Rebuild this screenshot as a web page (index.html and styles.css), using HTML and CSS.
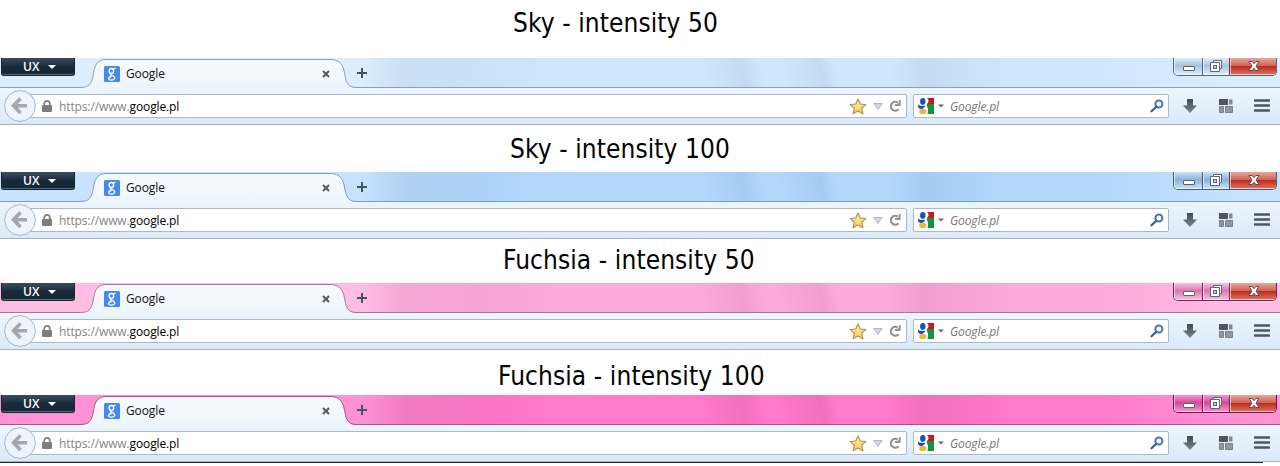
FILE: index.html
```html
<!DOCTYPE html>
<html lang="en">
<head>
<meta charset="utf-8">
<title>Theme intensity</title>
<link rel="stylesheet" href="styles.css">
</head>
<body>
<svg class="defs" width="0" height="0" aria-hidden="true">
  <defs>
    <linearGradient id="tabfill" x1="0" y1="0" x2="0" y2="1"><stop offset="0" stop-color="#f6fafe"/><stop offset="1" stop-color="#edf5fc"/></linearGradient>
    <linearGradient id="gold" x1="0" y1="0" x2="0" y2="1"><stop offset="0" stop-color="#fff3a0"/><stop offset="1" stop-color="#f7c858"/></linearGradient>
    <linearGradient id="steel" x1="0" y1="0" x2="0" y2="1"><stop offset="0" stop-color="#414b55"/><stop offset="1" stop-color="#7a8590"/></linearGradient>
    <symbol id="tabshape" viewBox="0 0 276 30">
      <path d="M0 30V29.5C9 29.500 11.500 26 13 18C14.500 9 16 1.500 26 1.500H250C260 1.500 263 7 264.500 15C266 23 267 29.500 276 29.500V30Z" fill="url(#tabfill)" stroke="none"/>
      <path d="M0 29.500C9 29.500 11.500 26 13 18C14.500 9 16 1.500 26 1.500H250C260 1.500 263 7 264.500 15C266 23 267 29.500 276 29.500" fill="none"/>
    </symbol>
    <symbol id="favicon" viewBox="0 0 16 16">
      <rect width="16" height="16" rx="1.500" fill="#4688ee"/>
      <g fill="none" stroke="#fff"><ellipse cx="7.400" cy="5" rx="2.200" ry="2.500" stroke-width="1.400"/><path d="M9 3.200L11.500 2.200M8.500 7.300C5 8.500 6.500 9 8.500 9.700C12.500 11.200 10.500 14.200 7.500 14.200C4 14.200 3.500 11 7.500 10.500" stroke-width="1.300"/></g>
    </symbol>
    <symbol id="close" viewBox="0 0 8 8"><path d="M1 1L7 7M7 1L1 7" stroke="#535a61" stroke-width="2"/></symbol>
    <symbol id="plus" viewBox="0 0 10 10"><path d="M5 0V10M0 5H10" stroke="#465360" stroke-width="2"/></symbol>
    <symbol id="back" viewBox="0 0 32 32">
      <circle cx="16" cy="16" r="15.400" fill="#edf4fb" stroke="#a8b5c4"/>
      <path d="M16.500 8.500L9.500 15.700L16.500 23M10 15.700H23" fill="none" stroke="#a2a8ae" stroke-width="3.600"/>
    </symbol>
    <symbol id="lock" viewBox="0 0 10 12"><path d="M2.200 6V3.700C2.200 0 7.800 0 7.800 3.700V6" fill="none" stroke="#7d7d7d" stroke-width="1.700"/><rect y="5" width="10" height="7" rx="1" fill="#7d7d7d"/></symbol>
    <symbol id="star" viewBox="0 0 18 17"><path d="M9 1L11.300 6L16.800 6.600L12.700 10.300L13.900 15.800L9 13L4.100 15.800L5.300 10.300L1.200 6.600L6.700 6Z" fill="url(#gold)" stroke="#b4935a" stroke-linejoin="round" stroke-width="1.200"/></symbol>
    <symbol id="drop" viewBox="0 0 10 7"><path d="M.8.500H9.200L5 6.500Z" fill="#d4d8dc" stroke="#b2b7bc"/></symbol>
    <symbol id="reload" viewBox="0 0 12 12"><path d="M8.800 2.600A4.400 4.400 0 1 0 9.600 9.200" fill="none" stroke="#929292" stroke-width="2.200"/><path d="M11.600 0V6H5.800V4.300L8.500 4L9.900 2.600V0Z" fill="#929292"/></symbol>
    <symbol id="engine" viewBox="0 0 16 16">
      <path d="M8.500 0H16V6H8.500Z" fill="#d1161b"/><path d="M8.500 6H16V16H8.500Z" fill="#139344"/>
      <path d="M9 0C12 3 10 5 8.500 6.500C9 9 11 10 9.500 16H0V0Z" fill="#fff"/>
      <ellipse cx="4.800" cy="3.400" rx="2.700" ry="3.400" fill="#1754ae"/><path d="M0 6.500C3 9 5 7 7.500 8.500L4.500 10.800C2.500 11.500 0 10.500 0 8.500Z" fill="#1754ae"/>
      <ellipse cx="4.800" cy="13.400" rx="3.600" ry="2.600" fill="#f3b53c"/>
    </symbol>
    <symbol id="caret" viewBox="0 0 6 4"><path d="M0 .5H6L3 3.500Z" fill="#686868"/></symbol>
    <symbol id="find" viewBox="0 0 14 14"><circle cx="8.900" cy="5" r="3.500" fill="none" stroke="#3e79ae" stroke-width="2"/><path d="M6.300 7.700L1.500 12.300" stroke="#315f91" stroke-width="2.200" stroke-linecap="round"/></symbol>
    <symbol id="down" viewBox="0 0 14 14"><path d="M4 0H10V6.500H14L7 14L0 6.500H4Z" fill="url(#steel)"/></symbol>
    <symbol id="tiles" viewBox="0 0 14 14"><path d="M0 0H9V6H0Z" fill="#4d5660"/><path d="M10 .5H13.500V5.500H10Z" fill="#7f8993"/><path d="M.5 7.500H4.500V13.500H.5Z" fill="#9099a2" stroke="#77818b"/><path d="M6.500 7.500H13.500V13.500H6.500Z" fill="#9099a2" stroke="#77818b"/></symbol>
    <symbol id="menu" viewBox="0 0 16 13"><path d="M1 1.500H15M1 6.500H15M1 11.500H15" stroke="#4c5762" stroke-width="2.700" stroke-linecap="round"/></symbol>
    <symbol id="min" viewBox="0 0 12 5"><rect x=".5" y=".5" width="11" height="4" rx=".5" fill="#fff" stroke="#5b6474"/></symbol>
    <symbol id="restore" viewBox="0 0 12 12"><path d="M3.500 .5H11.500V8.500H9.500V11.500H.5V2.500H3.500Z" fill="#fff" stroke="#5b6474"/><path d="M3.500 2.500H9.500V8.500" fill="none" stroke="#5b6474"/><rect x="3.500" y="5.500" width="3" height="3" fill="#c5cfdd" stroke="#5b6474"/></symbol>
    <symbol id="x" viewBox="0 0 12 10"><path d="M1 .5H4.200L6 2.700L7.800 .5H11L8 5L11 9.500H7.800L6 7.300L4.200 9.500H1L4 5Z" fill="#fff" stroke="#6d4650"/></symbol>
  </defs>
</svg>

<section class="sample sky-50">
  <h2 class="title">Sky - intensity 50</h2>
  <div class="window">
    <div class="strip">
      <div class="app">UX<i class="arrow"></i></div>
      <div class="tab"><svg class="shape"><use href="#tabshape"/></svg><svg class="fav"><use href="#favicon"/></svg><span class="name">Google</span><svg class="close"><use href="#close"/></svg></div>
      <svg class="plus"><use href="#plus"/></svg>
      <div class="controls"><b class="cell"><svg class="min"><use href="#min"/></svg></b><b class="cell mid"><svg class="restore"><use href="#restore"/></svg></b><b class="cell quit"><svg class="x"><use href="#x"/></svg></b></div>
    </div>
    <div class="toolbar">
      <svg class="back"><use href="#back"/></svg>
      <div class="field url"><svg class="lock"><use href="#lock"/></svg><span class="address">https://www.<em>google.pl</em></span><svg class="star"><use href="#star"/></svg><svg class="drop"><use href="#drop"/></svg><svg class="reload"><use href="#reload"/></svg></div>
      <div class="field search"><svg class="engine"><use href="#engine"/></svg><svg class="caret"><use href="#caret"/></svg><span class="hint">Google.pl</span><svg class="find"><use href="#find"/></svg></div>
      <svg class="down"><use href="#down"/></svg><svg class="tiles"><use href="#tiles"/></svg><svg class="menu"><use href="#menu"/></svg>
    </div>
  </div>
</section>

<section class="sample sky-100">
  <h2 class="title">Sky - intensity 100</h2>
  <div class="window">
    <div class="strip">
      <div class="app">UX<i class="arrow"></i></div>
      <div class="tab"><svg class="shape"><use href="#tabshape"/></svg><svg class="fav"><use href="#favicon"/></svg><span class="name">Google</span><svg class="close"><use href="#close"/></svg></div>
      <svg class="plus"><use href="#plus"/></svg>
      <div class="controls"><b class="cell"><svg class="min"><use href="#min"/></svg></b><b class="cell mid"><svg class="restore"><use href="#restore"/></svg></b><b class="cell quit"><svg class="x"><use href="#x"/></svg></b></div>
    </div>
    <div class="toolbar">
      <svg class="back"><use href="#back"/></svg>
      <div class="field url"><svg class="lock"><use href="#lock"/></svg><span class="address">https://www.<em>google.pl</em></span><svg class="star"><use href="#star"/></svg><svg class="drop"><use href="#drop"/></svg><svg class="reload"><use href="#reload"/></svg></div>
      <div class="field search"><svg class="engine"><use href="#engine"/></svg><svg class="caret"><use href="#caret"/></svg><span class="hint">Google.pl</span><svg class="find"><use href="#find"/></svg></div>
      <svg class="down"><use href="#down"/></svg><svg class="tiles"><use href="#tiles"/></svg><svg class="menu"><use href="#menu"/></svg>
    </div>
  </div>
</section>

<section class="sample fuchsia-50">
  <h2 class="title">Fuchsia - intensity 50</h2>
  <div class="window">
    <div class="strip">
      <div class="app">UX<i class="arrow"></i></div>
      <div class="tab"><svg class="shape"><use href="#tabshape"/></svg><svg class="fav"><use href="#favicon"/></svg><span class="name">Google</span><svg class="close"><use href="#close"/></svg></div>
      <svg class="plus"><use href="#plus"/></svg>
      <div class="controls"><b class="cell"><svg class="min"><use href="#min"/></svg></b><b class="cell mid"><svg class="restore"><use href="#restore"/></svg></b><b class="cell quit"><svg class="x"><use href="#x"/></svg></b></div>
    </div>
    <div class="toolbar">
      <svg class="back"><use href="#back"/></svg>
      <div class="field url"><svg class="lock"><use href="#lock"/></svg><span class="address">https://www.<em>google.pl</em></span><svg class="star"><use href="#star"/></svg><svg class="drop"><use href="#drop"/></svg><svg class="reload"><use href="#reload"/></svg></div>
      <div class="field search"><svg class="engine"><use href="#engine"/></svg><svg class="caret"><use href="#caret"/></svg><span class="hint">Google.pl</span><svg class="find"><use href="#find"/></svg></div>
      <svg class="down"><use href="#down"/></svg><svg class="tiles"><use href="#tiles"/></svg><svg class="menu"><use href="#menu"/></svg>
    </div>
  </div>
</section>

<section class="sample fuchsia-100">
  <h2 class="title">Fuchsia - intensity 100</h2>
  <div class="window">
    <div class="strip">
      <div class="app">UX<i class="arrow"></i></div>
      <div class="tab"><svg class="shape"><use href="#tabshape"/></svg><svg class="fav"><use href="#favicon"/></svg><span class="name">Google</span><svg class="close"><use href="#close"/></svg></div>
      <svg class="plus"><use href="#plus"/></svg>
      <div class="controls"><b class="cell"><svg class="min"><use href="#min"/></svg></b><b class="cell mid"><svg class="restore"><use href="#restore"/></svg></b><b class="cell quit"><svg class="x"><use href="#x"/></svg></b></div>
    </div>
    <div class="toolbar">
      <svg class="back"><use href="#back"/></svg>
      <div class="field url"><svg class="lock"><use href="#lock"/></svg><span class="address">https://www.<em>google.pl</em></span><svg class="star"><use href="#star"/></svg><svg class="drop"><use href="#drop"/></svg><svg class="reload"><use href="#reload"/></svg></div>
      <div class="field search"><svg class="engine"><use href="#engine"/></svg><svg class="caret"><use href="#caret"/></svg><span class="hint">Google.pl</span><svg class="find"><use href="#find"/></svg></div>
      <svg class="down"><use href="#down"/></svg><svg class="tiles"><use href="#tiles"/></svg><svg class="menu"><use href="#menu"/></svg>
    </div>
  </div>
  <div class="underline"></div>
</section>
</body>
</html>
```
FILE: styles.css
```css
* { box-sizing: border-box; }
body { margin: 0; width: 1280px; height: 466px; overflow: hidden; background: #fff; font: 12px/16px "Open Sans", "Noto Sans", sans-serif; }
.defs { display: block; height: 0; }
svg { display: block; flex: none; }

.title { margin: 0; height: var(--gap); padding: var(--top) 0 0 var(--left); color: #000; font: 400 26px/32px "DejaVu Sans Condensed", "DejaVu Sans", sans-serif; font-stretch: condensed; letter-spacing: 0.1px; white-space: nowrap; }
.sky-50 { --gap: 58px; --top: 7px; --left: 513px; --frame: #d0e6fb; --lite: #dcedfe; --shade: rgba(150,180,205,.22); --line: #8e9fb9; --glass: #abc2dd; --rim: #4f6582; }
.sky-100 { --gap: 47px; --top: 8px; --left: 510px; --frame: #b3d8fc; --lite: #c6e2ff; --shade: rgba(110,155,200,.2); --line: #7c9dc0; --glass: #8eb1d8; --rim: #405f85; }
.fuchsia-50 { --gap: 44px; --top: 5px; --left: 503px; --frame: #fda9dc; --lite: #ffbde4; --shade: rgba(210,110,170,.22); --line: #a77994; --glass: #d678ae; --rim: #6d2c58; }
.fuchsia-100 { --gap: 45px; --top: 10px; --left: 498px; --frame: #ff7aca; --lite: #ff92d4; --shade: rgba(200,80,150,.25); --line: #a4578a; --glass: #d04b9a; --rim: #6c144d; }

.window { height: 67px; border-bottom: 1px solid #a5b5c6; }
.strip {
  display: flex; align-items: flex-start; height: 30px; padding: 0 3px 0 1px; border-bottom: 1px solid var(--line);
  background:
    linear-gradient(75deg, transparent 682px, var(--shade) 722px, transparent 742px, transparent 756px, var(--shade) 798px, transparent 812px),
    linear-gradient(90deg, transparent 360px, var(--shade) 405px, transparent 550px, transparent 890px, var(--shade) 925px, transparent 1010px) 0 0 / 100% 100%,
    linear-gradient(90deg, var(--lite) 0, var(--lite) 80px, var(--lite) 370px, var(--frame) 480px, var(--frame) 1100px, var(--lite) 1240px);
}
.app { display: flex; align-items: center; gap: 9px; width: 74px; height: 18px; padding: 1px 0 0 21px; border: 1px solid #142531; border-top: 0; border-radius: 0 0 3px 3px; box-shadow: inset 0 -1px #566877; background: linear-gradient(#3b4d5e, #182a3b 50%, #142735); color: #fff; font-weight: 600; font-size: 12px; }
.arrow { border: 4px solid transparent; border-top-color: #fff; border-bottom: 0; }
.tab { position: relative; display: flex; align-items: center; width: 276px; height: 30px; margin-left: 5px; padding: 2px 26px 0 24px; }
.shape { position: absolute; left: 0; top: 0; width: 276px; height: 30px; stroke: var(--line); }
.fav { position: relative; width: 16px; height: 16px; }
.name { position: relative; margin: 0 auto 1px 6px; color: #111; letter-spacing: -.1px; }
.tab .close { position: relative; width: 8px; height: 8px; margin-bottom: 1px; }
.plus { width: 10px; height: 10px; margin: 10px 0 0 1px; }
.controls { display: flex; width: 104px; height: 18px; margin-left: auto; border: 1px solid var(--rim); border-top: 0; border-radius: 0 0 5px 5px; overflow: hidden; }
.cell { display: flex; align-items: center; justify-content: center; width: 28px; padding: 0 0 1px 1px; background: linear-gradient(var(--lite), var(--glass) 45%, var(--lite)); box-shadow: inset 1px 0 rgba(255,255,255,.6), inset 0 -1px rgba(255,255,255,.6); }
.mid { width: 27px; padding: 0 1px 1px 0; border-left: 1px solid var(--rim); }
.quit { width: 47px; border-left: 1px solid #782f3b; background: linear-gradient(#e9a69c, #cf6453 45%, #bd2c1c 50%, #df7564); }
.min { width: 12px; height: 5px; margin-top: 4px; }
.restore { width: 12px; height: 12px; }
.x { width: 12px; height: 10px; }

.toolbar { display: flex; align-items: center; height: 36px; padding: 0 10px 0 4px; background: linear-gradient(#edf5fc, #dce9f8); }
.back { position: relative; z-index: 1; width: 32px; height: 32px; }
.field { display: flex; align-items: center; height: 24px; border: 1px solid #a9b9c7; border-radius: 2px; background: #fff; }
.url { width: 889px; margin-left: -18px; padding: 0 5px 0 23px; }
.lock { width: 10px; height: 12px; }
.address { margin: 2px auto 0 7px; color: #858585; letter-spacing: -.12px; }
.address em { color: #000; font-style: normal; }
.star { width: 18px; height: 17px; }
.drop { width: 10px; height: 7px; margin: 0 6px; }
.reload { width: 12px; height: 12px; }
.search { width: 256px; margin-left: 6px; padding: 0 4px; }
.engine { width: 16px; height: 16px; }
.caret { width: 6px; height: 4px; margin-left: 4px; }
.hint { margin: 2px auto 0 6px; color: #777; font-style: italic; letter-spacing: -.1px; }
.find { width: 14px; height: 14px; }
.down { width: 14px; height: 14px; margin-left: 14px; }
.tiles { width: 14px; height: 14px; margin-left: 22px; }
.menu { width: 16px; height: 13px; margin: 0 0 1px auto; }
.underline { width: 1263px; height: 1px; background: #20282c; }
```
